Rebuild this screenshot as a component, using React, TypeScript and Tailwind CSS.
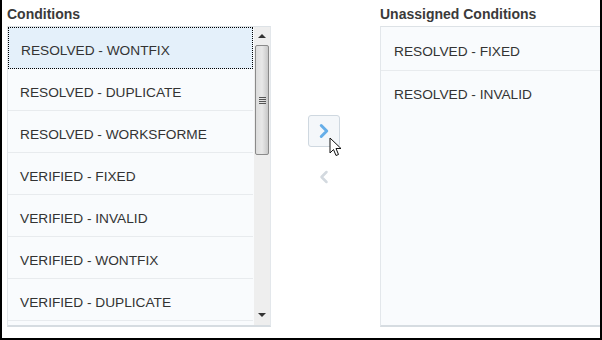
import { ChevronLeft, ChevronRight } from 'lucide-react'

const assigned = [
  'RESOLVED - WONTFIX',
  'RESOLVED - DUPLICATE',
  'RESOLVED - WORKSFORME',
  'VERIFIED - FIXED',
  'VERIFIED - INVALID',
  'VERIFIED - WONTFIX',
  'VERIFIED - DUPLICATE',
]

const unassigned = ['RESOLVED - FIXED', 'RESOLVED - INVALID']

function Cursor() {
  return (
    <svg
      className="absolute left-[21px] top-[22px]"
      width="14"
      height="21"
      viewBox="0 0 14 21"
    >
      <path
        d="M1 1 L1 16 L4.5 12.5 L7 18.5 L9.5 17.5 L7 11.5 L12 11.5 Z"
        fill="#fff"
        stroke="#111"
        strokeWidth="1"
        strokeLinejoin="round"
      />
    </svg>
  )
}

function Scrollbar() {
  return (
    <div className="flex w-[16px] flex-col bg-[#eeeeee]">
      <div className="flex h-[18px] items-center justify-center">
        <div className="h-0 w-0 border-x-[4px] border-b-[4px] border-x-transparent border-b-[#333]" />
      </div>
      <div className="mx-auto flex h-[110px] w-[14px] items-center justify-center rounded-[2px] border border-[#8a8a8a] bg-gradient-to-r from-[#dcdcdc] via-[#e8e8e8] to-[#c8c8c8]">
        <div className="flex flex-col gap-[1px]">
          <div className="h-px w-[7px] bg-[#555]" />
          <div className="h-px w-[7px] bg-[#555]" />
          <div className="h-px w-[7px] bg-[#555]" />
          <div className="h-px w-[7px] bg-[#555]" />
        </div>
      </div>
      <div className="flex-1" />
      <div className="flex h-[20px] items-center justify-center">
        <div className="h-0 w-0 border-x-[4px] border-t-[4px] border-x-transparent border-t-[#333]" />
      </div>
    </div>
  )
}

export default function App() {
  return (
    <div
      className="flex h-[340px] w-[602px] border-x-2 border-b-2 border-black bg-white text-[#333]"
      style={{ fontFamily: '"Liberation Sans", Arial, sans-serif' }}
    >
      <div className="flex w-[269px] flex-col pl-[5px]">
        <div className="h-[26px] pt-[4px] text-[14px] font-bold text-[#3a3a3a]">
          Conditions
        </div>
        <div className="flex h-[301px] border-x border-t border-b-2 border-x-[#e3e7eb] border-t-[#dde2e6] border-b-[#d6dce1] bg-[#f9fbfd]">
          <div className="flex-1 overflow-hidden pr-[1px]">
            {assigned.map((item, i) => (
              <div
                key={item}
                className={
                  i === 0
                    ? 'flex h-[42px] items-center border border-dotted border-black bg-[#e4f0fa] pl-[12px] pt-[7px] text-[13.7px]'
                    : 'flex h-[42px] items-center border-b border-[#e8ebee] pl-[12px] pt-[7px] text-[13.7px]'
                }
              >
                {item}
              </div>
            ))}
          </div>
          <Scrollbar />
        </div>
      </div>

      <div className="flex w-[109px] flex-col items-center pt-[115px]">
        <div className="relative ml-[-4px]">
          <div className="flex h-[32px] w-[32px] items-center justify-center rounded-[3px] border border-[#cfd8e0] bg-[#f4f7fa]">
            <ChevronRight size={22} strokeWidth={3.2} className="text-[#66aee8]" />
          </div>
          <Cursor />
        </div>
        <div className="ml-[-4px] mt-[20px] flex h-[20px] w-[32px] items-center justify-center">
          <ChevronLeft size={20} strokeWidth={3} className="text-[#d3d9df]" />
        </div>
      </div>

      <div className="flex flex-1 flex-col">
        <div className="h-[26px] pt-[4px] text-[14px] font-bold text-[#3a3a3a]">
          Unassigned Conditions
        </div>
        <div className="flex h-[301px] flex-col border-l border-t border-b-2 border-l-[#e3e7eb] border-t-[#dde2e6] border-b-[#d6dce1] bg-[#f9fbfd]">
          {unassigned.map((item, i) => (
            <div
              key={item}
              className={
                i === 0
                  ? 'flex h-[44px] items-center border-b border-[#e8ebee] pl-[13px] pt-[7px] text-[13.7px]'
                  : 'flex h-[42px] items-center pl-[13px] pt-[7px] text-[13.7px]'
              }
            >
              {item}
            </div>
          ))}
        </div>
      </div>
    </div>
  )
}
